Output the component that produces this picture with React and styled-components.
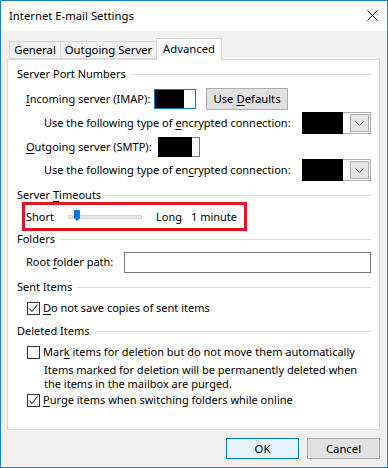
import React from "react";
import styled, { createGlobalStyle } from "styled-components";

const Global = createGlobalStyle`
  html, body { margin: 0; padding: 0; background: #ffffff; }
  body {
    font-family: "Noto Sans", "Open Sans", sans-serif;
    font-size: 11px;
    color: #000;
  }
  * { box-sizing: border-box; }
`;

const Window = styled.div`
  width: 388px;
  height: 468px;
  border: 1px solid #1883d7;
  background: #f0f0f0;
  display: flex;
  flex-direction: column;
`;

const TitleBar = styled.div`
  height: 30px;
  background: #ffffff;
  display: flex;
  align-items: center;
  justify-content: space-between;
  padding: 0 9px 1px 8px;
  font-size: 11.3px;
`;

const Body = styled.div`
  flex: 1;
  display: flex;
  flex-direction: column;
  padding: 0 7px 0 6px;
`;

const TabStrip = styled.div`
  margin-top: 7px;
  height: 21px;
  display: flex;
  align-items: flex-end;
  padding-left: 2px;
  position: relative;
  z-index: 1;
`;

const Tab = styled.div`
  width: ${(p) => p.$w}px;
  height: ${(p) => (p.$active ? 22 : 18)}px;
  margin-bottom: ${(p) => (p.$active ? -1 : 0)}px;
  margin-left: ${(p) => (p.$first ? 0 : -1)}px;
  background: ${(p) => (p.$active ? "#ffffff" : "#f0f0f0")};
  border: 1px solid #d9d9d9;
  border-bottom: ${(p) => (p.$active ? "none" : "1px solid #d9d9d9")};
  display: flex;
  align-items: center;
  justify-content: center;
  padding-bottom: ${(p) => (p.$active ? 2 : 0)}px;
  line-height: 14px;
  font-size: 11.3px;
`;

const Panel = styled.div`
  height: 371px;
  background: #ffffff;
  border: 1px solid #d9d9d9;
  display: flex;
  flex-direction: column;
  padding: 6px 8px 0 9px;
`;

const Header = styled.div`
  display: flex;
  align-items: center;
  gap: 5px;
  height: ${(p) => p.$h || 14}px;
  margin-top: ${(p) => p.$mt || 0}px;
  line-height: 14px;
  white-space: nowrap;
`;

const Rule = styled.div`
  flex: 1;
  height: 1px;
  background: #dcdcdc;
`;

const Row = styled.div`
  display: flex;
  align-items: center;
  height: ${(p) => p.$h}px;
  margin-top: ${(p) => p.$mt || 0}px;
  padding-left: ${(p) => p.$indent || 0}px;
  white-space: nowrap;
  line-height: 14px;
`;

const Label = styled.span`
  width: ${(p) => (p.$w ? `${p.$w}px` : "auto")};
  flex: ${(p) => (p.$grow ? 1 : "none")};
  margin-left: ${(p) => p.$ml || 0}px;
`;

const U = styled.span`
  text-decoration: underline;
  text-underline-offset: 2px;
  text-decoration-thickness: 1px;
`;

const PortBox = styled.div`
  width: 42px;
  height: 20px;
  border: 1px solid ${(p) => (p.$focus ? "#0078d7" : "#7a7a7a")};
  background: #fff;
  display: flex;
`;

const Redact = styled.div`
  width: ${(p) => p.$w}px;
  align-self: stretch;
  background: #000;
  margin: ${(p) => (p.$cover ? "-1px 0 -1px -1px" : "0")};
`;

const Button = styled.div`
  width: ${(p) => p.$w}px;
  height: ${(p) => p.$h || 21}px;
  margin-left: ${(p) => p.$ml || 0}px;
  background: ${(p) => (p.$primary ? "#e5f1fb" : "#e1e1e1")};
  border: 1px solid ${(p) => (p.$primary ? "#0078d7" : "#adadad")};
  display: flex;
  align-items: center;
  justify-content: center;
  line-height: 14px;
  font-size: 11.3px;
`;

const Combo = styled.div`
  width: 69px;
  height: 22px;
  border: 1px solid #adadad;
  background: #fff;
  display: flex;
  align-items: center;
`;

const ComboButton = styled.div`
  margin-left: auto;
  margin-right: 1px;
  width: 19px;
  height: 18px;
  background: #e5e5e5;
  border: 1px solid #acacac;
  display: flex;
  align-items: center;
  justify-content: center;
`;

const RedBox = styled.div`
  margin-left: 5px;
  width: 225px;
  height: 29px;
  border: 3px solid #e81123;
  display: flex;
  align-items: center;
  padding-left: 1px;
  white-space: nowrap;
  line-height: 14px;
`;

const Track = styled.div`
  width: 74px;
  height: 4px;
  background: #e7eaea;
  border: 1px solid #d6d6d6;
  position: relative;
`;

const Thumb = styled.svg`
  position: absolute;
  left: 5px;
  top: -6px;
`;

const TextBox = styled.div`
  width: ${(p) => p.$w}px;
  height: 21px;
  border: 1px solid #7a7a7a;
  background: #fff;
`;

const Check = styled.div`
  width: 13px;
  height: 13px;
  border: 1px solid #333;
  background: #fff;
  margin-right: 3px;
  display: flex;
  align-items: center;
  justify-content: center;
`;

const Note = styled.div`
  margin-top: 3px;
  padding-left: 27px;
  line-height: 14px;
`;

const Footer = styled.div`
  margin-top: 8px;
  display: flex;
  justify-content: flex-end;
  gap: 8px;
`;

const Chevron = () => (
  <svg width="9" height="5" viewBox="0 0 9 5">
    <polyline points="0.5,0.5 4.5,4.5 8.5,0.5" fill="none" stroke="#606060" strokeWidth="1" />
  </svg>
);

const Tick = () => (
  <svg width="11" height="11" viewBox="0 0 11 11">
    <polyline points="1.5,5.5 4,8.5 9.5,1.5" fill="none" stroke="#333" strokeWidth="1.1" />
  </svg>
);

const CheckRow = ({ checked, mt, children }) => (
  <Row $h={16} $mt={mt} $indent={10}>
    <Check>{checked && <Tick />}</Check>
    <span>{children}</span>
  </Row>
);

export default function App() {
  return (
    <>
      <Global />
      <Window>
        <TitleBar>
          <span>Internet E-mail Settings</span>
          <svg width="11" height="11" viewBox="0 0 11 11">
            <path d="M0.5 0.5 L10.5 10.5 M10.5 0.5 L0.5 10.5" stroke="#000" strokeWidth="1" />
          </svg>
        </TitleBar>
        <Body>
          <TabStrip>
            <Tab $w={52} $first>General</Tab>
            <Tab $w={97}>Outgoing Server</Tab>
            <Tab $w={66} $active>Advanced</Tab>
          </TabStrip>
          <Panel>
            <Header $h={16}>
              <span>Server Port Numbers</span>
              <Rule />
            </Header>
            <Row $h={23} $mt={5} $indent={9}>
              <Label $w={128}>
                <U>I</U>ncoming server (IMAP):
              </Label>
              <PortBox $focus>
                <Redact $w={29} />
              </PortBox>
              <Button $w={82} $h={22} $ml={10}>
                Use&nbsp;<U>D</U>efaults
              </Button>
            </Row>
            <Row $h={22} $mt={2} $indent={27}>
              <Label $grow>
                Use the following type of <U>e</U>ncrypted connection:
              </Label>
              <Combo>
                <Redact $w={41} $cover />
                <ComboButton>
                  <Chevron />
                </ComboButton>
              </Combo>
            </Row>
            <Row $h={22} $mt={2} $indent={9}>
              <Label $w={132}>
                <U>O</U>utgoing server (SMTP):
              </Label>
              <PortBox>
                <Redact $w={34} $cover />
              </PortBox>
            </Row>
            <Row $h={22} $mt={1} $indent={27}>
              <Label $grow>
                Use the following type of en<U>c</U>rypted connection:
              </Label>
              <Combo>
                <Redact $w={41} $cover />
                <ComboButton>
                  <Chevron />
                </ComboButton>
              </Combo>
            </Row>
            <Header $mt={7}>
              <span>
                Server <U>T</U>imeouts
              </span>
              <Rule />
            </Header>
            <RedBox>
              <Label $w={42}>Short</Label>
              <Track>
                <Thumb width="6" height="11" viewBox="0 0 6 11">
                  <path d="M0 0 H6 V8 L3 11 L0 8 Z" fill="#0078d7" />
                </Thumb>
              </Track>
              <Label $w={35} $ml={14}>Long</Label>
              <span>1 minute</span>
            </RedBox>
            <Header $mt={1}>
              <span>Folders</span>
              <Rule />
            </Header>
            <Row $h={22} $mt={5} $indent={9}>
              <Label $w={98}>
                Root <U>f</U>older path:
              </Label>
              <TextBox $w={248} />
            </Row>
            <Header $mt={7}>
              <span>Sent Items</span>
              <Rule />
            </Header>
            <CheckRow checked mt={6}>
              <U>D</U>o not save copies of sent items
            </CheckRow>
            <Header $mt={8}>
              <span>Deleted Items</span>
              <Rule />
            </Header>
            <CheckRow mt={6}>
              Mar<U>k</U> items for deletion but do not move them automatically
            </CheckRow>
            <Note>
              Items marked for deletion will be permanently deleted when
              <br />
              the items in the mailbox are purged.
            </Note>
            <CheckRow checked mt={1}>
              <U>P</U>urge items when switching folders while online
            </CheckRow>
          </Panel>
          <Footer>
            <Button $w={73} $primary>OK</Button>
            <Button $w={73}>Cancel</Button>
          </Footer>
        </Body>
      </Window>
    </>
  );
}
